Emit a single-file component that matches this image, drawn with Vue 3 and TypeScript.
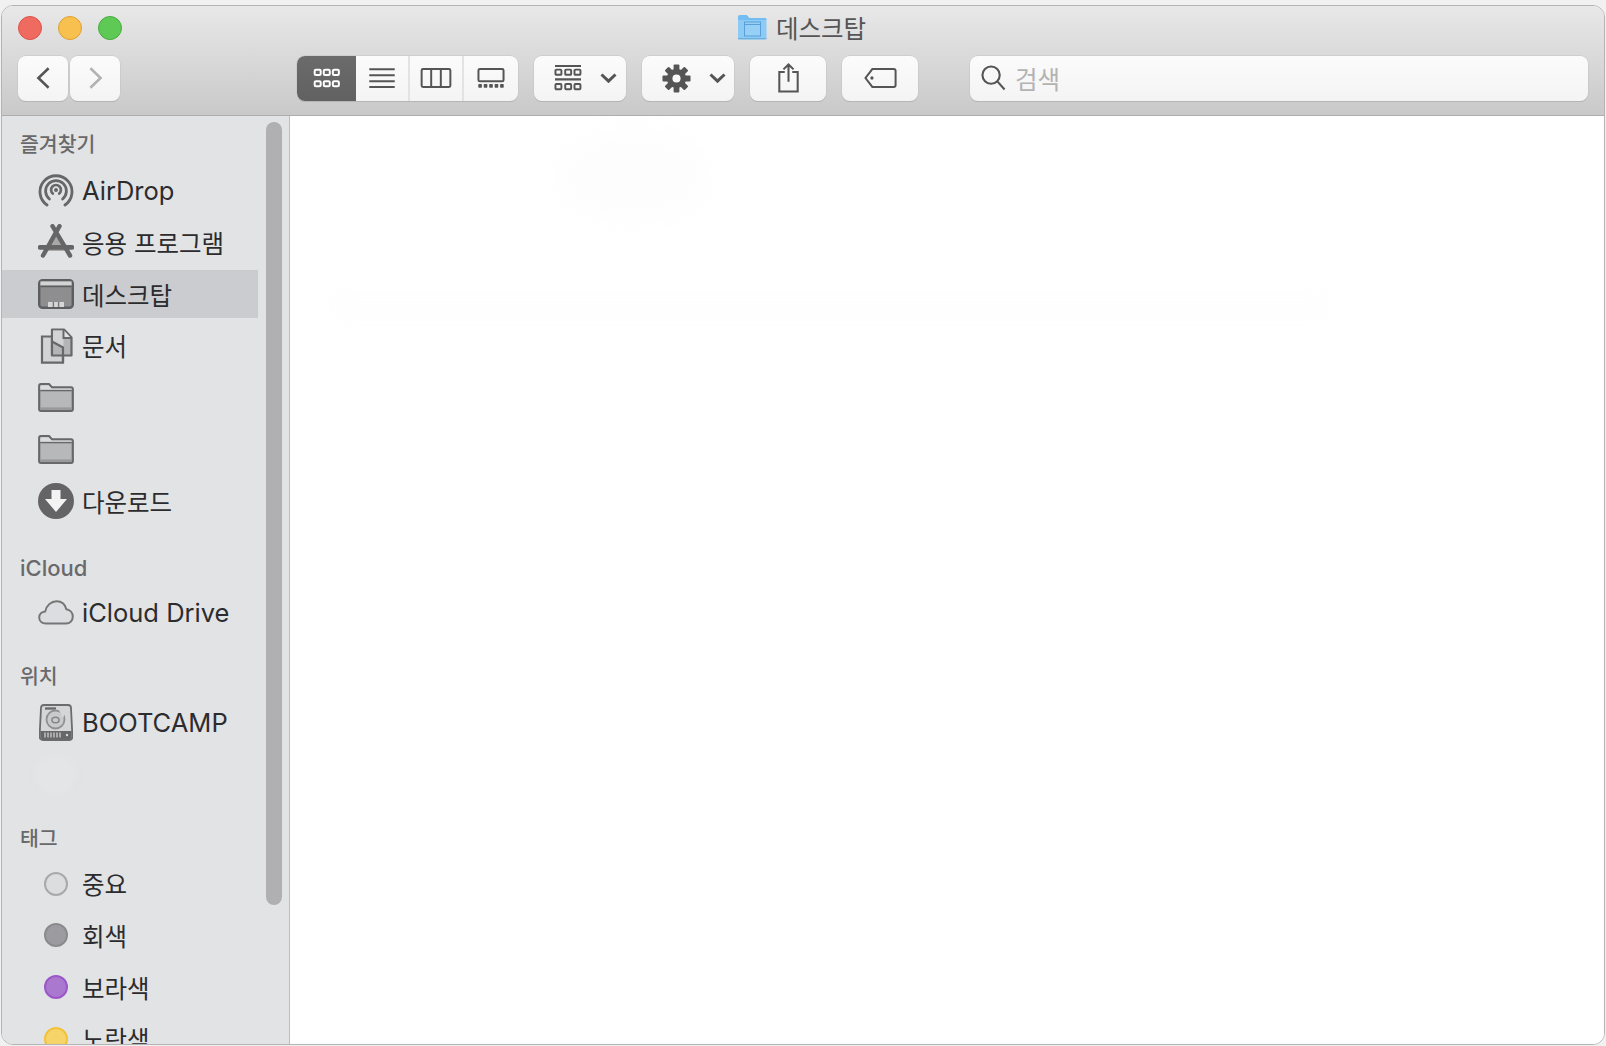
<template>
  <div class="page">
    <div class="window">
      <header class="toolbar">
        <div class="title-row">
          <div class="lights">
            <span class="light red"></span>
            <span class="light yellow"></span>
            <span class="light green"></span>
          </div>
          <div class="title">
            <svg class="title-folder" width="30" height="26" viewBox="0 0 30 26">
              <path d="M1 3.5Q1 1 3 1H9.5L12.5 4H27.5Q29.5 4 29.5 6V23.5Q29.5 25.5 27.5 25.5H3Q1 25.5 1 23.5Z" fill="#8ccbf6" />
              <path d="M1 6H29.5V5Q29.5 4 27.5 4H12.5L9.5 1H3Q1 1 1 3.5Z" fill="#74bdf2" />
              <rect x="7.5" y="8" width="16" height="14" fill="#96d0f7" stroke="#5b9fd4" stroke-width="1" />
              <path d="M7.5 10.5H23.5" stroke="#5b9fd4" stroke-width="1" />
              <path d="M1 24.6H29.5" stroke="#6eaede" stroke-width="1.4" />
            </svg>
            <span>데스크탑</span>
          </div>
          <div></div>
        </div>
        <div class="tools">
          <div class="nav">
            <button class="btn nav-btn">
              <svg width="17" height="24" viewBox="0 0 20 28"><path d="M16 2.5L4 14L16 25.5" class="line thick" /></svg>
            </button>
            <button class="btn nav-btn">
              <svg width="17" height="24" viewBox="0 0 20 28"><path d="M4 2.5L16 14L4 25.5" class="line thick dim" /></svg>
            </button>
          </div>

          <div class="btn segs">
            <div class="seg active">
              <svg width="29" height="20" viewBox="0 0 30 22">
                <g v-for="p in gridCells" :key="p.x + '-' + p.y">
                  <rect :x="p.x" :y="p.y" width="6.6" height="5.6" rx="1.4" fill="none" stroke="#fff" stroke-width="2.2" />
                </g>
              </svg>
            </div>
            <div class="seg list">
              <svg width="28" height="20" viewBox="0 0 30 22">
                <path d="M1 1.5H29M1 8H29M1 14.5H29M1 21H29" class="line" />
              </svg>
            </div>
            <div class="seg cols">
              <svg width="32" height="20" viewBox="0 0 34 22">
                <rect x="1.2" y="1.2" width="31.6" height="19.6" rx="1.5" class="line" />
                <path d="M11.7 1.2V20.8M22.3 1.2V20.8" class="line" />
              </svg>
            </div>
            <div class="seg gallery">
              <svg width="28" height="20" viewBox="0 0 30 22">
                <rect x="1.2" y="1.2" width="27.6" height="13.4" rx="1.5" class="line" />
                <rect v-for="x in [1, 7, 13, 19, 25]" :key="x" :x="x" y="17.6" width="4" height="4" rx="0.8" fill="#555" />
              </svg>
            </div>
          </div>

          <button class="btn menu-btn arrange">
            <svg width="28" height="26" viewBox="0 0 30 28">
              <path d="M1 1H29M1 15.5H29" class="line" />
              <g v-for="p in arrangeCells" :key="p.x + '-' + p.y">
                <rect :x="p.x" :y="p.y" width="6.4" height="5.6" rx="1" fill="none" stroke="#555" stroke-width="2.1" />
              </g>
            </svg>
            <svg class="chev" width="17" height="10" viewBox="0 0 17 10"><path d="M1.5 1.5L8.5 8.2L15.5 1.5" class="line thick" /></svg>
          </button>

          <button class="btn menu-btn action">
            <svg width="29" height="29" viewBox="0 0 30 30">
              <g fill="#555">
                <rect v-for="a in gearTeeth" :key="a" x="12" y="0.5" width="6" height="29" rx="1" :transform="`rotate(${a} 15 15)`" />
              </g>
              <circle cx="15" cy="15" r="10" fill="#555" />
              <circle cx="15" cy="15" r="4.2" fill="#f8f8f8" />
            </svg>
            <svg class="chev" width="17" height="10" viewBox="0 0 17 10"><path d="M1.5 1.5L8.5 8.2L15.5 1.5" class="line thick" /></svg>
          </button>

          <button class="btn plain-btn share">
            <svg width="23" height="30" viewBox="0 0 24 32">
              <path d="M8 9.5H2.2V30.4H21.8V9.5H16" class="line" />
              <path d="M12 20V1.8M6.6 6.8L12 1.6L17.4 6.8" class="line" />
            </svg>
          </button>

          <button class="btn plain-btn tag">
            <svg width="35" height="20" viewBox="0 0 36 22">
              <path d="M9 1.2H32.5Q34.6 1.2 34.6 3.3V18.7Q34.6 20.8 32.5 20.8H9L1.5 11Z" class="line" />
              <circle cx="8.6" cy="11" r="1.8" fill="#555" />
            </svg>
          </button>

          <div class="btn search">
            <svg width="25" height="26" viewBox="0 0 26 27">
              <circle cx="10.5" cy="10.5" r="9" class="line" />
              <path d="M17 17L24.5 25.5" class="line" />
            </svg>
            <span class="placeholder">검색</span>
          </div>
        </div>
      </header>

      <div class="body">
        <aside class="sidebar">
          <section v-for="group in groups" :key="group.title" class="group" :class="group.cls">
            <h3 class="group-title" :class="{ latin: isLatin(group.title) }">{{ group.title }}</h3>
            <ul class="rows">
              <li v-for="(item, i) in group.items" :key="i" class="row" :class="{ selected: item.selected }">
                <span class="icon">
                  <svg v-if="item.icon === 'airdrop'" width="36" height="36" viewBox="0 0 36 36">
                    <g fill="none" stroke="#676767" stroke-linecap="round">
                      <path d="M9 32A16 16 0 1 1 27 32" stroke-width="2.8" />
                      <path d="M11.4 26A10.4 10.4 0 1 1 24.6 26" stroke-width="2.8" />
                      <path d="M14.8 20.6A4.9 4.9 0 1 1 21.2 20.6" stroke-width="2.6" />
                    </g>
                    <circle cx="18" cy="17" r="2" fill="#676767" />
                  </svg>
                  <svg v-else-if="item.icon === 'apps'" width="36" height="36" viewBox="0 0 36 36">
                    <path d="M18 8L9 27H27Z" fill="#a9a9a9" />
                    <g stroke="#666" stroke-linecap="round" fill="none">
                      <path d="M14.5 2.2L32 31.5M21.5 2.2L5 31.5" stroke-width="4.4" />
                      <path d="M2 23.4H34" stroke-width="4.6" />
                    </g>
                  </svg>
                  <svg v-else-if="item.icon === 'desktop'" width="36" height="30" viewBox="0 0 36 30">
                    <rect x="1.2" y="1.2" width="33.6" height="27.6" rx="3.4" fill="#8e8e90" stroke="#5e5e60" stroke-width="2.4" />
                    <rect x="2.4" y="2.4" width="31.2" height="4.2" fill="#d2d3d5" />
                    <path d="M2.4 7.4H33.6" stroke="#5e5e60" stroke-width="1.6" />
                    <path d="M10 23H26V28H10Z" fill="#d6d6d8" />
                    <path d="M15.4 23V28M20.6 23V28" stroke="#77777a" stroke-width="1.4" />
                  </svg>
                  <svg v-else-if="item.icon === 'docs'" width="36" height="36" viewBox="0 0 36 36">
                    <path d="M25 10.5H33.5V27.5H25Z" fill="#b4b5b7" />
                    <path d="M4 8.5H14V27H25V34.6H4Z" fill="#d2d3d5" stroke="#686868" stroke-width="2.2" />
                    <path d="M14 1.5H26L33.5 9.5V27.5H14Z" fill="#b4b5b7" stroke="#686868" stroke-width="2.2" stroke-linejoin="round" />
                    <path d="M15 2.5H25.5V27H24.5V19L15 13.5Z" fill="#d2d3d5" />
                    <path d="M25.5 2V10H33" fill="#e4e4e6" stroke="#686868" stroke-width="2" />
                    <path d="M14 13.5L25 19.5V34" fill="none" stroke="#686868" stroke-width="2.2" />
                  </svg>
                  <svg v-else-if="item.icon === 'folder'" width="36" height="29" viewBox="0 0 36 29">
                    <path d="M1.2 3Q1.2 1.2 3 1.2H11L14 4.4H33Q34.8 4.4 34.8 6.2V26Q34.8 27.8 33 27.8H3Q1.2 27.8 1.2 26Z" fill="#b7b8ba" stroke="#68686a" stroke-width="2.2" />
                    <path d="M2.3 6.8V3.2Q2.3 2.3 3.2 2.3H10.6L13.6 5.5H33.6V6.8Z" fill="#dcdde0" />
                    <path d="M2.3 7.6H33.7" stroke="#68686a" stroke-width="1.4" />
                    <path d="M2.3 24.4H33.7V26.7H2.3Z" fill="#98989a" />
                  </svg>
                  <svg v-else-if="item.icon === 'download'" width="36" height="36" viewBox="0 0 36 36">
                    <circle cx="18" cy="18" r="18" fill="#646466" />
                    <path d="M13.5 7H22.5V16H29L18 29L7 16H13.5Z" fill="#f3f3f3" />
                  </svg>
                  <svg v-else-if="item.icon === 'cloud'" width="36" height="25" viewBox="0 0 36 25">
                    <path d="M8 23.6C3.6 23.6 1.2 20.8 1.2 17.6C1.2 14.2 3.8 11.6 7.2 11.4C8.4 5.6 13 1.2 18.6 1.2C23.8 1.2 27.2 4.6 28.4 9.2C32 9.8 34.8 12.8 34.8 16.6C34.8 20.6 32 23.6 28 23.6Z" fill="#dcdde0" stroke="#767678" stroke-width="2" />
                  </svg>
                  <svg v-else-if="item.icon === 'disk'" width="34" height="37" viewBox="0 0 34 37">
                    <path d="M5 1H29Q32 1 32 4L33.4 32Q33.4 36 30 36H4Q.6 36 .6 32L2 4Q2 1 5 1Z" fill="#d5d6d8" stroke="#6c6c6e" stroke-width="1.8" />
                    <path d="M6 4.5H17" stroke="#6c6c6e" stroke-width="2.4" />
                    <circle cx="16.5" cy="15.5" r="9" fill="#c9cacc" stroke="#909092" stroke-width="1.8" />
                    <ellipse cx="16.5" cy="16" rx="3.6" ry="2.8" fill="none" stroke="#858587" stroke-width="1.5" />
                    <path d="M20 6L27 5L24 15Z" fill="#d5d6d8" />
                    <path d="M1.4 27H32.6V32Q32.6 35.2 30 35.2H4Q1.4 35.2 1.4 32Z" fill="#67676a" />
                    <path d="M6 28.5V33.5M9 28.5V33.5M12 28.5V33.5M15 28.5V33.5M18 28.5V33.5M21 28.5V33.5" stroke="#c8c8ca" stroke-width="1.4" />
                    <circle cx="28" cy="31" r="1.2" fill="#d8d8da" />
                  </svg>
                  <span v-else-if="item.icon === 'faint'" class="faint"></span>
                  <span v-else-if="item.color" class="dot" :style="{ background: item.color, borderColor: item.ring }"></span>
                </span>
                <span v-if="item.label" class="label" :class="{ latin: isLatin(item.label) }">{{ item.label }}</span>
              </li>
            </ul>
          </section>
          <div class="scroll-thumb"></div>
        </aside>
        <main class="content">
          <div class="ghost ghost-a"></div>
          <div class="ghost ghost-b"></div>
        </main>
      </div>
    </div>
  </div>
</template>

<script setup lang="ts">
interface SideItem {
  label?: string
  icon?: string
  color?: string
  ring?: string
  selected?: boolean
}

interface SideGroup {
  title: string
  cls: string
  items: SideItem[]
}

const gridCells = [2, 12, 22].flatMap((x) => [
  { x, y: 2 },
  { x, y: 14.5 },
])

const arrangeCells = [1.5, 12, 22].flatMap((x) => [
  { x, y: 5 },
  { x, y: 20.5 },
])

const gearTeeth = [0, 45, 90, 135]

// hangul glyphs come out wider than the latin ones at one size
const isLatin = (text: string) => /^[A-Za-z ]+$/.test(text)

const groups: SideGroup[] = [
  {
    title: '즐겨찾기',
    cls: 'favorites',
    items: [
      { label: 'AirDrop', icon: 'airdrop' },
      { label: '응용 프로그램', icon: 'apps' },
      { label: '데스크탑', icon: 'desktop', selected: true },
      { label: '문서', icon: 'docs' },
      { icon: 'folder' },
      { icon: 'folder' },
      { label: '다운로드', icon: 'download' },
    ],
  },
  {
    title: 'iCloud',
    cls: 'icloud',
    items: [{ label: 'iCloud Drive', icon: 'cloud' }],
  },
  {
    title: '위치',
    cls: 'places',
    items: [{ label: 'BOOTCAMP', icon: 'disk' }, { icon: 'faint' }],
  },
  {
    title: '태그',
    cls: 'tags',
    items: [
      { label: '중요', color: '#dcdddf', ring: '#a9a9ab' },
      { label: '회색', color: '#9c9ca0', ring: '#8b8b8f' },
      { label: '보라색', color: '#ab78d0', ring: '#9b58c8' },
      { label: '노란색', color: '#f6d46a', ring: '#f2c33a' },
    ],
  },
]
</script>

<style scoped>
.page {
  height: 1046px;
  padding: 5px 1px 0 1px;
  box-sizing: border-box;
  background: #f1f1f1;
  overflow: hidden;
  font-family: Inter, "Noto Sans CJK KR", sans-serif;
}

.window {
  height: 1040px;
  display: flex;
  flex-direction: column;
  box-sizing: border-box;
  border: 1px solid #b4b4b4;
  border-radius: 12px;
  overflow: hidden;
  background: #fff;
}

.toolbar {
  height: 110px;
  flex: none;
  box-sizing: border-box;
  background: linear-gradient(#e8e8e8, #c9c9c9);
  border-bottom: 1px solid #adadad;
}

.title-row {
  height: 50px;
  padding-bottom: 6px;
  box-sizing: border-box;
  display: grid;
  grid-template-columns: 1fr auto 1fr;
  align-items: center;
}

.lights {
  display: flex;
  gap: 16px;
  padding-left: 16px;
}

.light {
  width: 24px;
  height: 24px;
  box-sizing: border-box;
  border-radius: 50%;
  border: 1px solid;
}

.red { background: #ef6a5f; border-color: #d9534a; }
.yellow { background: #f7c04f; border-color: #dfa02f; }
.green { background: #5fc955; border-color: #46ab3e; }

.title {
  display: flex;
  align-items: center;
  gap: 9px;
  padding-right: 3px;
  padding-bottom: 2px;
  font-size: 24.5px;
  color: #555;
}

.tools {
  display: flex;
  height: 44.5px;
  padding: 0 16px 0 16px;
  align-items: stretch;
}

.btn {
  display: flex;
  align-items: center;
  justify-content: center;
  padding: 0;
  box-sizing: border-box;
  border: none;
  border-radius: 8px;
  background: linear-gradient(#fbfbfb, #f4f4f4);
  box-shadow: 0 0 0 0.5px #c2c2c2, 0 1px 0.5px #a9a9a9;
}

.nav {
  display: flex;
  gap: 2px;
}

.nav-btn {
  width: 50px;
}

.segs {
  width: 221px;
  margin-left: 177px;
  align-items: stretch;
  overflow: hidden;
}

.seg {
  display: flex;
  align-items: center;
  justify-content: center;
  box-sizing: border-box;
}

.seg.active {
  width: 59px;
  background: linear-gradient(#6b6b6b, #616161);
}

.seg.list {
  width: 52px;
}

.seg.cols {
  width: 54px;
  border-left: 2px solid #e3e3e3;
}

.seg.gallery {
  flex: 1;
  border-left: 2px solid #e3e3e3;
}

.menu-btn {
  width: 92px;
  margin-left: 16px;
  justify-content: flex-start;
  padding-left: 20px;
}

.menu-btn .chev {
  margin-left: 18px;
}

.plain-btn {
  width: 76px;
  margin-left: 16px;
}

.search {
  flex: 1;
  margin-left: 52px;
  justify-content: flex-start;
  padding-left: 11px;
}

.placeholder {
  margin-left: 9px;
  font-size: 24.5px;
  color: #b3b3b3;
}

.line {
  fill: none;
  stroke: #555;
  stroke-width: 2.2;
}

.line.thick {
  stroke-width: 3;
}

.line.dim {
  stroke: #b2b2b2;
}

.body {
  flex: 1;
  min-height: 0;
  display: flex;
}

.sidebar {
  position: relative;
  width: 288px;
  flex: none;
  box-sizing: border-box;
  background: #e2e3e5;
  border-right: 1px solid #bdbdbd;
  overflow: hidden;
}

.group {
  width: 256px;
}

.group-title {
  margin: 0;
  height: 24px;
  line-height: 24px;
  padding-left: 18px;
  font-size: 20.5px;
  font-weight: 500;
  color: #69696b;
}

.group-title.latin {
  font-size: 22px;
}

.favorites { padding-top: 17px; }
.icloud { padding-top: 30.5px; }
.places { padding-top: 28px; }
.tags { padding-top: 28px; }

.rows {
  list-style: none;
  margin: 0;
  padding: 0;
  display: flex;
  flex-direction: column;
  gap: 3.8px;
}

.favorites .rows { margin-top: 9.5px; }
.icloud .rows { margin-top: 9px; }
.places .rows { margin-top: 10px; }
.tags .rows { margin-top: 9px; }

.row {
  height: 48px;
  display: flex;
  align-items: center;
  gap: 8px;
  padding-left: 36px;
  flex: none;
}

.row.selected {
  background: #cbccd0;
}

.icon {
  width: 36px;
  height: 36px;
  flex: none;
  display: flex;
  align-items: center;
  justify-content: center;
}

.label {
  font-size: 24.5px;
  color: #2c2c2e;
  white-space: nowrap;
}

.label.latin {
  font-size: 25.5px;
}

.dot {
  width: 24px;
  height: 24px;
  box-sizing: border-box;
  border-radius: 50%;
  border: 2px solid;
}

.faint {
  width: 40px;
  height: 40px;
  flex: none;
  border-radius: 50%;
  background: #e4e5e7;
  filter: blur(3px);
}

.scroll-thumb {
  position: absolute;
  left: 264px;
  top: 6px;
  width: 16px;
  height: 783px;
  border-radius: 8px;
  background: #b0b0b2;
}

.content {
  position: relative;
  flex: 1;
  background: #fff;
  overflow: hidden;
}

.ghost {
  position: absolute;
  background: #fdfdfd;
  filter: blur(10px);
}

.ghost-a {
  left: 268px;
  top: 15px;
  width: 150px;
  height: 90px;
  border-radius: 50%;
}

.ghost-b {
  left: 40px;
  top: 175px;
  width: 1000px;
  height: 30px;
  background: #fefefe;
}
</style>
